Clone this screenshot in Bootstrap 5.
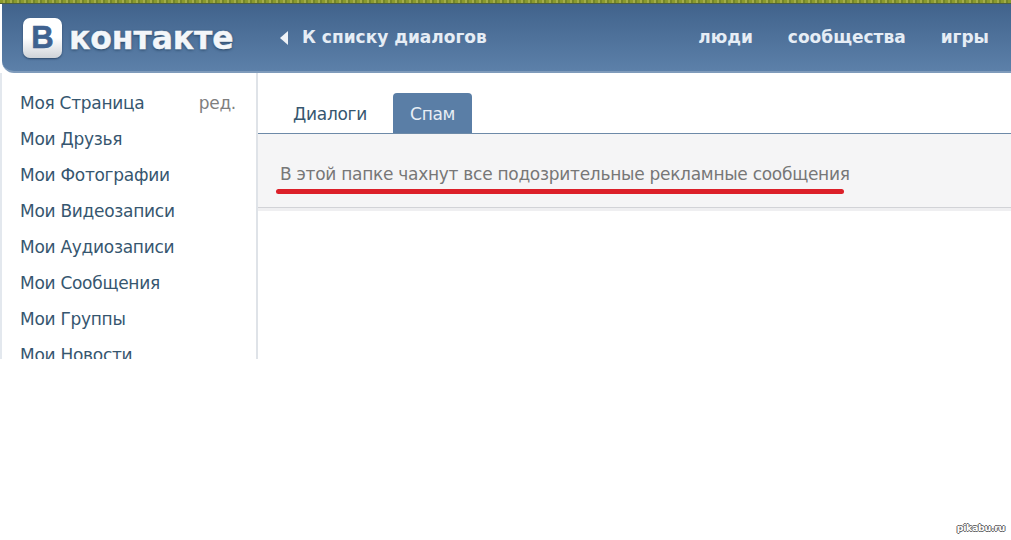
<!DOCTYPE html>
<html lang="ru">
<head>
<meta charset="utf-8">
<title>ВКонтакте</title>
<link rel="stylesheet" href="https://cdn.jsdelivr.net/npm/bootstrap@5.3.0/dist/css/bootstrap.min.css">
<style>
html,body{background:#fff;margin:0;height:540px;overflow:hidden}
body{font-family:"DejaVu Sans","Liberation Sans",sans-serif;position:relative}
.shot{height:359px;overflow:hidden;background:#fff}
.grass{height:4px;background:repeating-linear-gradient(90deg,#8a9a2e 0 3px,#a3ad4a 3px 5px,#74862a 5px 7px);border-bottom:1px solid #4d5f3f}
.vk-head{height:69px;margin-left:2px;background:linear-gradient(#41638c,#5c80a9);border-bottom:2px solid #7f9bbb;border-bottom-left-radius:12px;color:#e6edf5;font-weight:700;font-size:17px}
.logo-box{width:39px;height:40px;background:linear-gradient(#fff 50%,#cfd3d8);border-radius:7px;color:#3f6290;font-size:31px;line-height:39px;text-align:center;font-weight:700;margin-left:21px;font-family:"Liberation Sans",sans-serif;box-shadow:0 1px 2px #2b4768;-webkit-text-stroke:.6px #3f6290}
.logo-word{font-size:31.5px;line-height:40px;color:#f3f6f9;margin-left:7px;letter-spacing:-.1px;font-weight:700;text-shadow:0 1px 3px #24405f;-webkit-text-stroke:.4px #f3f6f9;width:211px}
.back-arrow{width:0;height:0;border-style:solid;border-width:7px 8px 7px 0;border-color:transparent #eef2f7 transparent transparent;margin-right:14px}
.head-link{color:#e6edf5;text-decoration:none;padding-top:1px}
.top-links{gap:35px;padding-right:22px}
.side-col{width:258px;flex:none;border-left:2px solid #e3e8ee;border-right:2px solid #dfe3e8;padding-top:12px;height:286px}
.side-item{display:flex;justify-content:space-between;height:36px;line-height:36px;padding:0 20px 0 18px;color:#36566f;font-size:17px;letter-spacing:-.28px;text-decoration:none}
.side-edit{color:#7f7f7f}
.tab-row{height:61px;padding:20px 0 0 18px;border-bottom:1px solid #6d8aa8;gap:9px}
.tab-item{display:block;height:40px;line-height:42px;padding:0 17px;font-size:17px;letter-spacing:-.28px;color:#36566f;text-decoration:none;border-radius:4px 4px 0 0}
.tab-active{background:#5a7ea6;color:#e8eef5}
.notice{height:74px;background:#f5f5f6;border-bottom:1px solid #d2d3d7;box-shadow:0 3px 0 #efeff1;padding:28px 0 0 22px;font-size:17px;letter-spacing:-.28px;line-height:24px;color:#777;position:relative}
.red-line{position:absolute;left:18px;top:55px;width:568px;height:5px;border-radius:3px;background:#dc2029}
.wm{position:absolute;right:6px;bottom:6px;font-size:9.5px;letter-spacing:-.35px;font-weight:700;color:#fff;text-shadow:-1px 0 #666,1px 0 #666,0 -1px #666,0 1px #666;line-height:13px}
</style>
</head>
<body>
<div class="shot">
  <div class="grass"></div>
  <header class="vk-head d-flex align-items-center">
    <div class="logo-box flex-shrink-0">В</div>
    <div class="logo-word flex-shrink-0">контакте</div>
    <div class="back-arrow flex-shrink-0"></div>
    <a class="head-link" href="#">К списку диалогов</a>
    <nav class="d-flex top-links ms-auto">
      <a class="head-link" href="#">люди</a>
      <a class="head-link" href="#">сообщества</a>
      <a class="head-link" href="#">игры</a>
    </nav>
  </header>
  <div class="d-flex">
    <aside class="side-col">
      <a class="side-item" href="#"><span>Моя Страница</span><span class="side-edit">ред.</span></a>
      <a class="side-item" href="#">Мои Друзья</a>
      <a class="side-item" href="#">Мои Фотографии</a>
      <a class="side-item" href="#">Мои Видеозаписи</a>
      <a class="side-item" href="#">Мои Аудиозаписи</a>
      <a class="side-item" href="#">Мои Сообщения</a>
      <a class="side-item" href="#">Мои Группы</a>
      <a class="side-item" href="#">Мои Новости</a>
    </aside>
    <main class="flex-grow-1">
      <div class="tab-row d-flex">
        <a class="tab-item" href="#">Диалоги</a>
        <a class="tab-item tab-active" href="#">Спам</a>
      </div>
      <div class="notice">В этой папке чахнут все подозрительные рекламные сообщения<div class="red-line"></div></div>
    </main>
  </div>
</div>
<div class="wm">pikabu.ru</div>
<script src="https://cdn.jsdelivr.net/npm/bootstrap@5.3.0/dist/js/bootstrap.bundle.min.js"></script>
</body>
</html>
